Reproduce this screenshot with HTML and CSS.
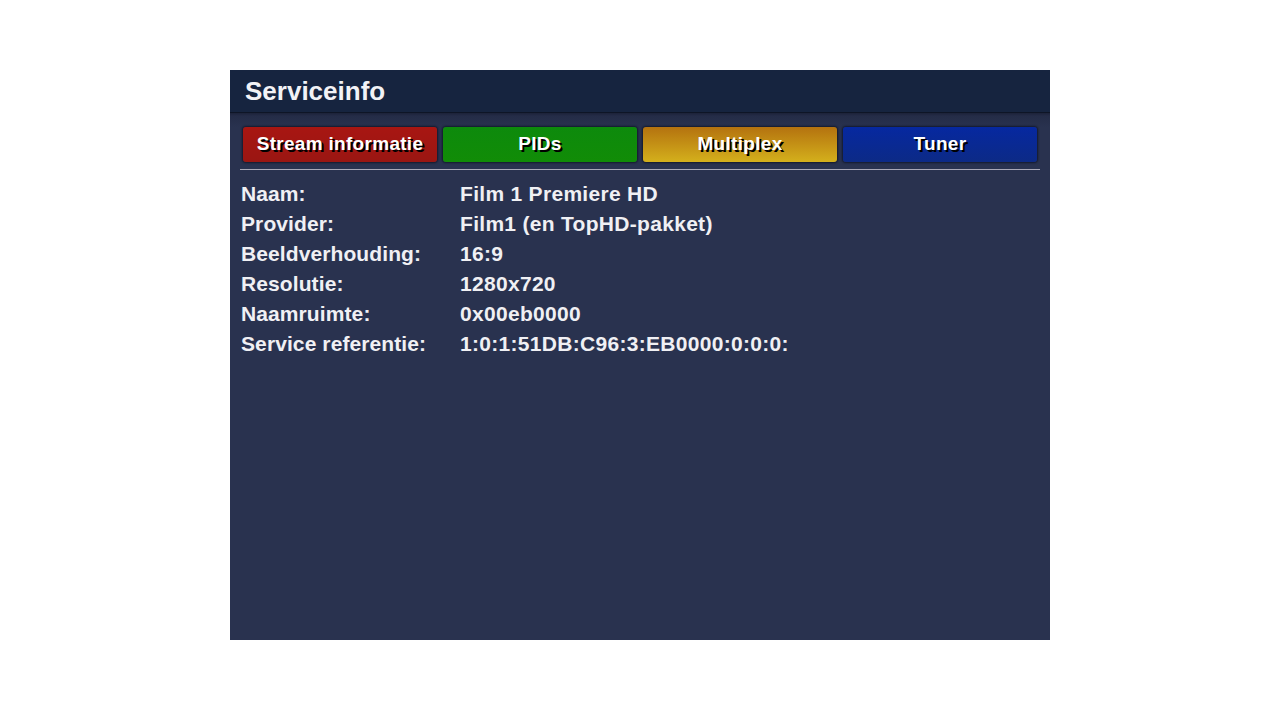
FILE: index.html
```html
<!DOCTYPE html>
<html>
<head>
<meta charset="utf-8">
<link rel="stylesheet" href="styles.css">
</head>
<body>
<div class="panel">
  <div class="header">Serviceinfo</div>
  <div class="content">
    <div class="tabs">
      <div class="tab red">Stream informatie</div>
      <div class="tab green">PIDs</div>
      <div class="tab yellow">Multiplex</div>
      <div class="tab blue">Tuner</div>
    </div>
    <div class="sep"></div>
    <div class="rows">
      <div class="row"><span class="label">Naam:</span><span class="value">Film 1 Premiere HD</span></div>
      <div class="row"><span class="label">Provider:</span><span class="value">Film1 (en TopHD-pakket)</span></div>
      <div class="row"><span class="label">Beeldverhouding:</span><span class="value">16:9</span></div>
      <div class="row"><span class="label">Resolutie:</span><span class="value">1280x720</span></div>
      <div class="row"><span class="label">Naamruimte:</span><span class="value">0x00eb0000</span></div>
      <div class="row"><span class="label">Service referentie:</span><span class="value">1:0:1:51DB:C96:3:EB0000:0:0:0:</span></div>
    </div>
  </div>
</div>
</body>
</html>
```

FILE: styles.css
```css
html, body {
  margin: 0;
  padding: 0;
  background: #ffffff;
  font-family: "Liberation Sans", Arial, sans-serif;
}
body {
  padding-top: 70px;
}
.panel {
  width: 820px;
  height: 570px;
  margin: 0 auto;
  background: #29324f;
  display: flex;
  flex-direction: column;
  overflow: hidden;
}
.header {
  height: 42px;
  background: #16243f;
  color: #f2f2f6;
  font-weight: bold;
  font-size: 26px;
  line-height: 42px;
  padding-left: 15px;
  border-bottom: 1px solid #0e1526;
}
.content {
  flex: 1;
  padding: 14px 10px 0 10px;
  background: linear-gradient(#1c2239 0px, #242c47 3px, #29324f 14px);
}
.tabs {
  display: flex;
  gap: 6px;
  padding: 0 3px;
}
.tab {
  flex: 1;
  height: 35px;
  line-height: 34px;
  border-radius: 3px;
  text-align: center;
  color: #ffffff;
  font-weight: bold;
  font-size: 19px;
  letter-spacing: 0.3px;
  text-shadow: 2px 2px 0 #000000;
  box-shadow: 0 0 2px 1px rgba(10, 14, 30, 0.7);
}
.red { background: linear-gradient(#a81612, #9a1612); }
.green { background: linear-gradient(#0d8a0c, #118c07); }
.yellow { background: linear-gradient(#b4720f, #d4b01c); }
.blue { background: linear-gradient(#0628a0, #0c2a86); }
.sep {
  height: 1px;
  background: #a8a8b8;
  margin-top: 7px;
}
.rows {
  padding-top: 9px;
  padding-left: 1px;
}
.row {
  display: flex;
  height: 30px;
  line-height: 30px;
  color: #f0f0f4;
  font-weight: bold;
  font-size: 21px;
}
.label {
  width: 219px;
  letter-spacing: 0.1px;
}
.value {
  letter-spacing: 0.3px;
}
```
